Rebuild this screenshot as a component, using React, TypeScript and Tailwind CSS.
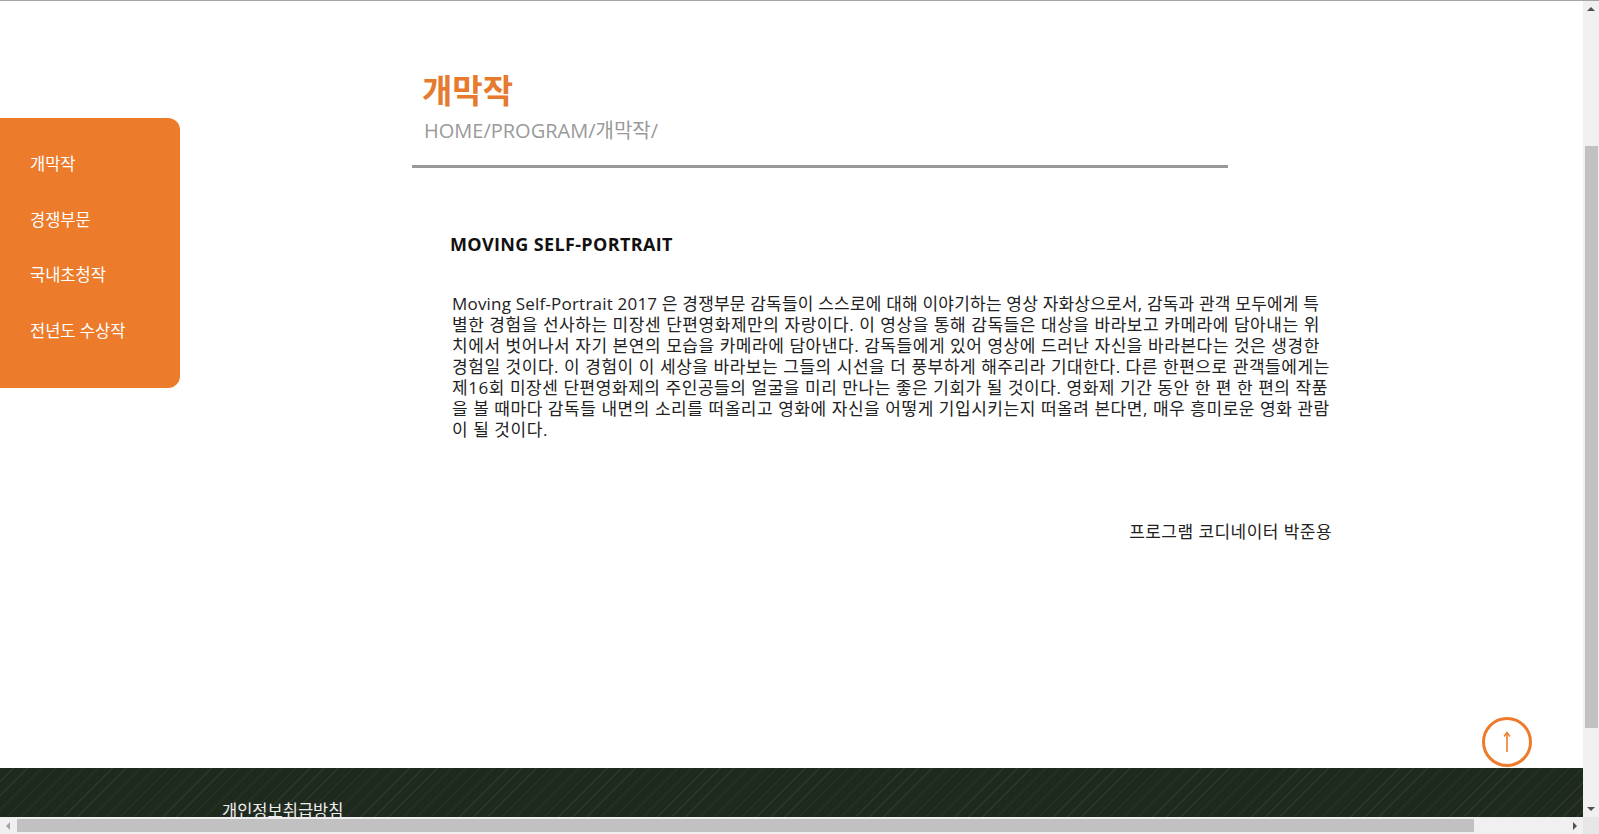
import React from "react";

const FONT = { fontFamily: '"Open Sans", "Noto Sans CJK KR", sans-serif' };

const lines = [
  "Moving Self-Portrait 2017 은 경쟁부문 감독들이 스스로에 대해 이야기하는 영상 자화상으로서, 감독과 관객 모두에게 특",
  "별한 경험을 선사하는 미장센 단편영화제만의 자랑이다. 이 영상을 통해 감독들은 대상을 바라보고 카메라에 담아내는 위",
  "치에서 벗어나서 자기 본연의 모습을 카메라에 담아낸다. 감독들에게 있어 영상에 드러난 자신을 바라본다는 것은 생경한",
  "경험일 것이다. 이 경험이 이 세상을 바라보는 그들의 시선을 더 풍부하게 해주리라 기대한다. 다른 한편으로 관객들에게는",
  "제16회 미장센 단편영화제의 주인공들의 얼굴을 미리 만나는 좋은 기회가 될 것이다. 영화제 기간 동안 한 편 한 편의 작품",
  "을 볼 때마다 감독들 내면의 소리를 떠올리고 영화에 자신을 어떻게 기입시키는지 떠올려 본다면, 매우 흥미로운 영화 관람",
  "이 될 것이다.",
];

const menu = ["개막작", "경쟁부문", "국내초청작", "전년도 수상작"];

function Tri({ dir, color }: { dir: "up" | "down" | "left" | "right"; color: string }) {
  const pts: Record<string, string> = {
    up: "1,6 5,2 9,6",
    down: "1,3 5,7 9,3",
    left: "6,1 2,5 6,9",
    right: "3,1 7,5 3,9",
  };
  return (
    <svg width="10" height="10" viewBox="0 0 10 10">
      <polygon points={pts[dir]} fill={color} />
    </svg>
  );
}

export default function App() {
  return (
    <div
      className="w-[1599px] h-[834px] overflow-hidden flex flex-col border-t border-[#a6a6a6] bg-white"
      style={FONT}
    >
      <div className="flex h-[816px]">
        {/* page area */}
        <div className="relative w-[1583px] h-[816px] flex flex-col overflow-hidden">
          <div className="flex h-[767px]">
            <aside className="w-[180px] h-[270px] mt-[117px] shrink-0 rounded-r-[12px] bg-[#ed7b2c] pt-[19px]">
              {menu.map((m) => (
                <div
                  key={m}
                  className="h-[55.5px] flex items-center pl-[30px] text-[16.5px] text-white"
                >
                  {m}
                </div>
              ))}
            </aside>
            <main className="ml-[232px] w-[920px] shrink-0">
              <h1 className="mt-[70px] pl-[10px] text-[33px] leading-[40px] font-bold text-[#e67a2e]">
                개막작
              </h1>
              <div className="mt-[6px] pl-[12px] text-[20px] leading-[28px] text-[#9a9a9a]">
                HOME/PROGRAM/개막작/
              </div>
              <div className="mt-[20px] w-[816px] h-[3px] bg-[#999999]" />
              <h2 className="mt-[64px] pl-[38px] text-[18px] leading-[24px] font-bold text-[#111111] tracking-[0.35px]">
                MOVING SELF-PORTRAIT
              </h2>
              <div className="mt-[37px] ml-[40px] w-[880px] text-[17px] leading-[21px] text-[#222222]">
                {lines.map((l, i) => (
                  <div
                    key={i}
                    className={
                      i === 0
                        ? "whitespace-nowrap tracking-[0.2px]"
                        : "whitespace-nowrap tracking-[0.55px]"
                    }
                  >
                    {l}
                  </div>
                ))}
              </div>
              <div className="mt-[81px] ml-[40px] w-[880px] text-right text-[17px] leading-[21px] text-[#222222] tracking-[0.45px]">
                프로그램 코디네이터 박준용
              </div>
            </main>
          </div>
          <footer className="h-[49px] bg-[#1f2a1f] bg-[repeating-linear-gradient(135deg,#1f2a1f_0px,#1f2a1f_9px,#2f3629_9px,#2f3629_10px)] pl-[222px] pt-[33px]">
            <div className="text-[16.5px] leading-[20px] text-[#eeeeee] whitespace-nowrap">
              개인정보취급방침
            </div>
          </footer>
          <button className="absolute right-[51px] bottom-[50px] w-[50px] h-[50px] rounded-full border-[3px] border-[#ee7b2b] bg-transparent flex items-center justify-center">
            <svg width="12" height="22" viewBox="0 0 12 22">
              <line x1="6" y1="2" x2="6" y2="21" stroke="#ee7b2b" strokeWidth="1.6" />
              <polyline points="3,5.5 6,1.5 9,5.5" fill="none" stroke="#ee7b2b" strokeWidth="1.4" />
            </svg>
          </button>
        </div>
        {/* vertical scrollbar */}
        <div className="w-[16px] h-[816px] bg-[#f0f0f0] flex flex-col items-center">
          <div className="h-[17px] w-full flex items-center justify-center">
            <Tri dir="up" color="#505050" />
          </div>
          <div className="mt-[128px] w-[13px] h-[582px] bg-[#c1c1c1]" />
          <div className="flex-1" />
          <div className="h-[17px] w-full flex items-center justify-center">
            <Tri dir="down" color="#505050" />
          </div>
        </div>
      </div>
      {/* horizontal scrollbar */}
      <div className="flex h-[17px]">
        <div className="w-[1583px] h-[17px] bg-[#f0f0f0] flex items-center">
          <div className="w-[17px] h-full flex items-center justify-center">
            <Tri dir="left" color="#a3a3a3" />
          </div>
          <div className="w-[1457px] h-[13px] bg-[#c1c1c1]" />
          <div className="flex-1" />
          <div className="w-[17px] h-full flex items-center justify-center">
            <Tri dir="right" color="#505050" />
          </div>
        </div>
        <div className="w-[16px] h-[17px] bg-[#e6e6e6]" />
      </div>
    </div>
  );
}
